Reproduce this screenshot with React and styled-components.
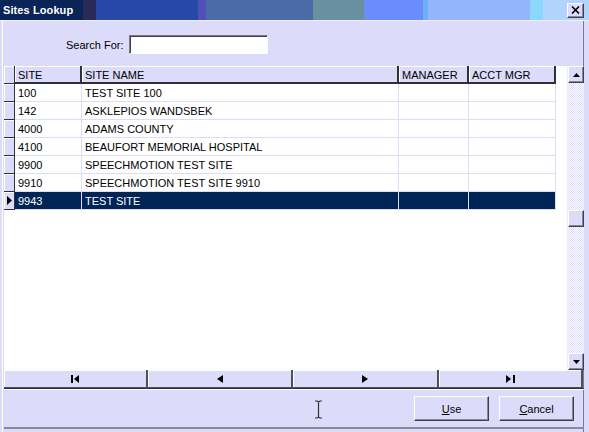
import React, { useState } from 'react';
import styled, { createGlobalStyle } from 'styled-components';

const GlobalStyle = createGlobalStyle`
  html, body {
    margin: 0;
    padding: 0;
    background: #dcdcfa;
  }
  * {
    box-sizing: border-box;
  }
`;

const LAVENDER = '#dcdcfa';
const FONT = `"Liberation Sans", Arial, sans-serif`;

const Window = styled.div`
  width: 589px;
  height: 432px;
  display: flex;
  flex-direction: column;
  background: ${LAVENDER};
  font-family: ${FONT};
  font-size: 11px;
  color: #000;
  overflow: hidden;
`;

const TitleBar = styled.div`
  height: 20px;
  flex: none;
  display: flex;
  align-items: center;
  padding: 0 5px 0 3px;
  background: linear-gradient(
    to right,
    #0a2458 0 83px,
    #2a2a58 83px 96px,
    #2848a8 96px 198px,
    #5050b8 198px 206px,
    #4a6aa8 206px 313px,
    #6890a0 313px 364px,
    #6a8cfc 364px 423px,
    #6cb0fc 423px 428px,
    #94b4fc 428px 530px,
    #8cd8fc 530px 543px,
    #b0d4fc 543px
  );
`;

const Title = styled.span`
  color: #fff;
  font-weight: 700;
  font-size: 11px;
  letter-spacing: 0.1px;
`;

const CloseButton = styled.button`
  margin-left: auto;
  width: 17px;
  height: 15px;
  padding: 0;
  display: flex;
  align-items: center;
  justify-content: center;
  background: ${LAVENDER};
  border: 1px solid;
  border-color: #fff #404048 #404048 #fff;
  box-shadow: inset -1px -1px 0 #8888a0;
`;

const Frame = styled.div`
  flex: 1;
  display: flex;
  flex-direction: column;
  padding: 0 5px 3px 4px;
  border-top: 1px solid #eeeefe;
  box-shadow: inset 2px 0 0 ${LAVENDER}, inset 3px 0 0 #fff, inset -5px 0 0 ${LAVENDER}, inset -6px 0 0 #7a7a8a;
`;

const SearchRow = styled.div`
  height: 44px;
  flex: none;
  display: flex;
  align-items: center;
  padding-left: 62px;
  gap: 6px;
  padding-top: 3px;
`;

const Label = styled.label`
  font-size: 11px;
`;

const SearchInput = styled.input`
  width: 139px;
  height: 19px;
  margin-top: -1px;
  background: #fff;
  border: 1px solid;
  border-color: #7a7a8a #fff #fff #7a7a8a;
  box-shadow: inset 1px 1px 0 #404048;
  outline: none;
  font-family: ${FONT};
  font-size: 11px;
  padding: 0 3px;
`;

const GridWrap = styled.div`
  height: 304px;
  flex: none;
  display: flex;
  background: #fff;
  margin-top: 1px;
`;

const Table = styled.div`
  flex: 1;
  display: flex;
  flex-direction: column;
`;

const Row = styled.div`
  display: grid;
  grid-template-columns: 11px 67px 317px 70px 87px;
  height: 18px;
`;

const Indicator = styled.div`
  background: ${LAVENDER};
  border-right: 1px solid #303038;
  border-bottom: 1px solid #303038;
  box-shadow: inset 1px 1px 0 #fff;
  display: flex;
  align-items: center;
  justify-content: center;
`;

const HeadCell = styled.div`
  background: ${LAVENDER};
  border-right: 2px solid #303038;
  border-bottom: 2px solid #303038;
  box-shadow: inset 1px 1px 0 #fff;
  padding: 2px 0 0 3px;
  line-height: 14px;
  white-space: nowrap;
  overflow: hidden;
`;

const Cell = styled.div`
  background: ${(p) => (p.$selected ? '#002456' : '#fff')};
  color: ${(p) => (p.$selected ? '#fff' : '#000')};
  border-right: 1px solid #dcdcf8;
  border-bottom: 1px solid #dcdcf8;
  padding: 2px 0 0 3px;
  line-height: 14px;
  white-space: nowrap;
  overflow: hidden;
`;

const ScrollBar = styled.div`
  width: 17px;
  flex: none;
  display: flex;
  flex-direction: column;
  padding-left: 1px;
  background: repeating-conic-gradient(#dcdcfa 0 25%, #ffffff 0 50%) 0 0 / 2px 2px;
`;

const ScrollButton = styled.div`
  height: 17px;
  flex: none;
  background: ${LAVENDER};
  border: 1px solid;
  border-color: #fff #404048 #404048 #fff;
  box-shadow: inset -1px -1px 0 #8888a0;
  display: flex;
  align-items: center;
  justify-content: center;
`;

const Track = styled.div`
  flex: 1;
  display: flex;
  flex-direction: column;
  padding-top: 127px;
`;

const NavBar = styled.div`
  height: 19px;
  flex: none;
  display: grid;
  grid-template-columns: 144px 145px 146px 144px;
  border-bottom: 1px solid #303038;
`;

const NavButton = styled.button`
  height: 18px;
  padding: 0;
  background: ${LAVENDER};
  border: none;
  border-right: 2px solid #505058;
  border-bottom: 1px solid #505058;
  box-shadow: inset 1px 1px 0 #fff;
  display: flex;
  align-items: center;
  justify-content: center;
`;

const Footer = styled.div`
  flex: 1;
  display: flex;
  align-items: flex-start;
  padding-top: 6px;
  border-top: 1px solid #fff;
  border-bottom: 2px solid #8a8a98;
`;

const CursorMark = styled.div`
  margin: 4px 0 0 310px;
  width: 9px;
  height: 19px;
`;

const Buttons = styled.div`
  margin-left: auto;
  display: flex;
  gap: 10px;
  padding-right: 10px;
`;

const DialogButton = styled.button`
  width: 75px;
  height: 25px;
  background: ${LAVENDER};
  border: 1px solid;
  border-color: #fff #404048 #404048 #fff;
  box-shadow: inset -1px -1px 0 #8888a0;
  font-family: ${FONT};
  font-size: 11px;
  color: #000;
  padding: 0;
  u {
    text-decoration: underline;
  }
`;

const Tri = ({ dir }) => {
  const paths = {
    up: 'M0 4 L3.5 0 L7 4 Z',
    down: 'M0 0 L7 0 L3.5 4 Z',
  };
  return (
    <svg width="7" height="4" viewBox="0 0 7 4">
      <path d={paths[dir]} fill="#000" />
    </svg>
  );
};

const NavIcon = ({ kind }) => {
  if (kind === 'first')
    return (
      <svg width="9" height="8" viewBox="0 0 9 8">
        <rect x="0" y="0" width="2" height="8" fill="#000" />
        <path d="M3 4 L8 0 L8 8 Z" fill="#000" />
      </svg>
    );
  if (kind === 'prev')
    return (
      <svg width="6" height="8" viewBox="0 0 6 8">
        <path d="M0 4 L6 0 L6 8 Z" fill="#000" />
      </svg>
    );
  if (kind === 'next')
    return (
      <svg width="6" height="8" viewBox="0 0 6 8">
        <path d="M6 4 L0 0 L0 8 Z" fill="#000" />
      </svg>
    );
  return (
    <svg width="9" height="8" viewBox="0 0 9 8">
      <path d="M5 4 L0 0 L0 8 Z" fill="#000" />
      <rect x="7" y="0" width="2" height="8" fill="#000" />
    </svg>
  );
};

const sites = [
  { site: '100', name: 'TEST SITE 100' },
  { site: '142', name: 'ASKLEPIOS WANDSBEK' },
  { site: '4000', name: 'ADAMS COUNTY' },
  { site: '4100', name: 'BEAUFORT MEMORIAL HOSPITAL' },
  { site: '9900', name: 'SPEECHMOTION TEST SITE' },
  { site: '9910', name: 'SPEECHMOTION TEST SITE 9910' },
  { site: '9943', name: 'TEST SITE' },
];

function App() {
  const [selected, setSelected] = useState('9943');
  const [search, setSearch] = useState('');

  return (
    <Window>
      <GlobalStyle />
      <TitleBar>
        <Title>Sites Lookup</Title>
        <CloseButton aria-label="Close">
          <svg width="9" height="8" viewBox="0 0 9 8">
            <path d="M1 0.5 L8 7.5 M8 0.5 L1 7.5" stroke="#000" strokeWidth="1.6" />
          </svg>
        </CloseButton>
      </TitleBar>
      <Frame>
        <SearchRow>
          <Label htmlFor="search">Search For:</Label>
          <SearchInput id="search" value={search} onChange={(e) => setSearch(e.target.value)} />
        </SearchRow>
        <GridWrap>
          <Table>
            <Row>
              <Indicator />
              <HeadCell>SITE</HeadCell>
              <HeadCell>SITE NAME</HeadCell>
              <HeadCell>MANAGER</HeadCell>
              <HeadCell>ACCT MGR</HeadCell>
            </Row>
            {sites.map((s) => {
              const isSel = s.site === selected;
              return (
                <Row key={s.site} onClick={() => setSelected(s.site)}>
                  <Indicator>
                    {isSel && (
                      <svg width="5" height="9" viewBox="0 0 5 9">
                        <path d="M0 0 L5 4.5 L0 9 Z" fill="#000" />
                      </svg>
                    )}
                  </Indicator>
                  <Cell $selected={isSel}>{s.site}</Cell>
                  <Cell $selected={isSel}>{s.name}</Cell>
                  <Cell $selected={isSel} />
                  <Cell $selected={isSel} />
                </Row>
              );
            })}
          </Table>
          <ScrollBar>
            <ScrollButton>
              <Tri dir="up" />
            </ScrollButton>
            <Track>
              <ScrollButton />
            </Track>
            <ScrollButton>
              <Tri dir="down" />
            </ScrollButton>
          </ScrollBar>
        </GridWrap>
        <NavBar>
          <NavButton><NavIcon kind="first" /></NavButton>
          <NavButton><NavIcon kind="prev" /></NavButton>
          <NavButton><NavIcon kind="next" /></NavButton>
          <NavButton><NavIcon kind="last" /></NavButton>
        </NavBar>
        <Footer>
          <CursorMark>
            <svg width="9" height="19" viewBox="0 0 9 19">
              <path d="M1 1 H3 L4.5 2 L6 1 H8 M4.5 2 V17 M1 18 H3 L4.5 17 L6 18 H8" stroke="#333" strokeWidth="1.2" fill="none" />
            </svg>
          </CursorMark>
          <Buttons>
            <DialogButton><u>U</u>se</DialogButton>
            <DialogButton><u>C</u>ancel</DialogButton>
          </Buttons>
        </Footer>
      </Frame>
    </Window>
  );
}

export default App;
